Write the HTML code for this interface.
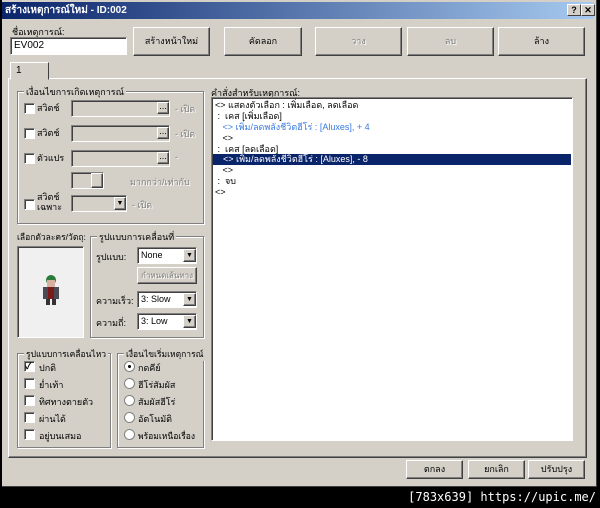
<!DOCTYPE html>
<html><head><meta charset="utf-8"><style>
*{box-sizing:border-box;margin:0;padding:0}
body{width:600px;height:508px;background:#000;position:relative;overflow:hidden;font-family:"Liberation Sans","Noto Sans CJK SC",sans-serif;font-size:9px;color:#000}
.a{position:absolute;white-space:nowrap}
#win{left:2px;top:0;width:595px;height:487px;background:#d4d0c8;border-right:1px solid #404040;border-bottom:1px solid #404040}
#tb{left:2px;top:2px;width:592px;height:17px;background:linear-gradient(90deg,#0a246a,#a6caf0);color:#fff;font-weight:bold;font-size:10px;line-height:17px;padding-left:3px}
.tbb{top:4px;width:14px;height:12px;background:#d4d0c8;border:1px solid;border-color:#fff #404040 #404040 #fff;color:#000;font-size:9px;font-weight:bold;text-align:center;line-height:10px}
.btn{background:#d4d0c8;border:1px solid;border-color:#fff #404040 #404040 #fff;box-shadow:inset -1px -1px #808080;text-align:center;font-size:9px;overflow:hidden}
.sunk{background:#fff;border:1px solid;border-color:#808080 #fff #fff #808080;box-shadow:inset 1px 1px #404040}
.dis{background:#d4d0c8}
.grp{border:1px solid #808080;box-shadow:1px 1px #fff, inset 1px 1px #fff}
.gl{background:#d4d0c8;padding:0 2px;top:-7px;left:6px;white-space:nowrap}
.cb{width:11px;height:11px;background:#fff;border:1px solid;border-color:#808080 #fff #fff #808080;box-shadow:inset 1px 1px #404040}
.rd{width:11px;height:11px;border-radius:50%;background:#fff;border:1px solid #808080}
.g{color:#808080;text-shadow:1px 1px #fff}
.row{left:3px;height:11px;line-height:11px;white-space:nowrap}
</style></head><body>
<div id="win" class="a"></div>
<div id="tb" class="a">สร้างเหตุการณ์ใหม่ - ID:002</div>
<div class="a tbb" style="left:567px">?</div>
<div class="a tbb" style="left:581px">✕</div>

<div class="a" style="left:12px;top:25px">ชื่อเหตุการณ์:</div>
<div class="a sunk" style="left:10px;top:37px;width:117px;height:18px;padding:2px 3px;font-size:10px">EV002</div>
<div class="a btn" style="left:133px;top:27px;width:77px;height:29px;line-height:27px">สร้างหน้าใหม่</div>
<div class="a btn" style="left:224px;top:27px;width:78px;height:29px;line-height:27px">คัดลอก</div>
<div class="a btn g" style="left:315px;top:27px;width:87px;height:29px;line-height:27px">วาง</div>
<div class="a btn g" style="left:407px;top:27px;width:87px;height:29px;line-height:27px">ลบ</div>
<div class="a btn" style="left:498px;top:27px;width:87px;height:29px;line-height:27px">ล้าง</div>

<div class="a" style="left:8px;top:78px;width:579px;height:380px;border:1px solid;border-color:#fff #404040 #404040 #fff;box-shadow:inset -1px -1px #808080"></div>
<div class="a" style="left:10px;top:62px;width:39px;height:18px;background:#d4d0c8;border:1px solid;border-color:#fff #404040 transparent #fff;padding:2px 5px;font-size:10px">1</div>

<div class="a grp" style="left:17px;top:91px;width:187px;height:133px"><span class="a gl">เงื่อนไขการเกิดเหตุการณ์</span></div>
<div class="a cb" style="left:24px;top:103px"></div><div class="a" style="left:37px;top:101px">สวิตช์</div>
<div class="a sunk dis" style="left:71px;top:100px;width:99px;height:17px"></div><div class="a btn" style="left:157px;top:102px;width:12px;height:12px;line-height:6px">...</div><div class="a g" style="left:175px;top:102px">- เปิด</div>
<div class="a cb" style="left:24px;top:128px"></div><div class="a" style="left:37px;top:126px">สวิตช์</div>
<div class="a sunk dis" style="left:71px;top:125px;width:99px;height:17px"></div><div class="a btn" style="left:157px;top:127px;width:12px;height:12px;line-height:6px">...</div><div class="a g" style="left:175px;top:127px">- เปิด</div>
<div class="a cb" style="left:24px;top:153px"></div><div class="a" style="left:37px;top:151px">ตัวแปร</div>
<div class="a sunk dis" style="left:71px;top:150px;width:99px;height:17px"></div><div class="a btn" style="left:157px;top:152px;width:12px;height:12px;line-height:6px">...</div><div class="a g" style="left:175px;top:152px">-</div>
<div class="a sunk dis" style="left:71px;top:172px;width:33px;height:17px"></div><div class="a btn" style="left:91px;top:173px;width:12px;height:15px"></div>
<div class="a g" style="left:130px;top:175px">มากกว่า/เท่ากับ</div>
<div class="a cb" style="left:24px;top:199px"></div><div class="a" style="left:37px;top:192px;line-height:10px">สวิตช์<br>เฉพาะ</div>
<div class="a sunk dis" style="left:71px;top:195px;width:56px;height:17px"></div><div class="a btn" style="left:114px;top:197px;width:12px;height:13px;font-size:7px;line-height:11px">▼</div><div class="a g" style="left:132px;top:198px">- เปิด</div>

<div class="a" style="left:211px;top:86px">คำสั่งสำหรับเหตุการณ์:</div>
<div class="a sunk" style="left:211px;top:97px;width:362px;height:344px">
<div class="a row" style="top:2px">&lt;&gt; แสดงตัวเลือก : เพิ่มเลือด, ลดเลือด</div>
<div class="a row" style="top:13px">&nbsp;: &nbsp;เคส [เพิ่มเลือด]</div>
<div class="a row" style="top:24px;color:#3a7be0">&nbsp;&nbsp;&nbsp;&lt;&gt; เพิ่ม/ลดพลังชีวิตฮีโร่ : [Aluxes], + 4</div>
<div class="a row" style="top:35px">&nbsp;&nbsp;&nbsp;&lt;&gt;</div>
<div class="a row" style="top:46px">&nbsp;: &nbsp;เคส [ลดเลือด]</div>
<div class="a row" style="top:56px;left:1px;width:358px;background:#0a246a;color:#fff">&nbsp;&nbsp;&nbsp;&nbsp;&lt;&gt; เพิ่ม/ลดพลังชีวิตฮีโร่ : [Aluxes], - 8</div>
<div class="a row" style="top:67px">&nbsp;&nbsp;&nbsp;&lt;&gt;</div>
<div class="a row" style="top:78px">&nbsp;: &nbsp;จบ</div>
<div class="a row" style="top:89px">&lt;&gt;</div>
</div>

<div class="a" style="left:17px;top:230px;font-size:8.5px">เลือกตัวละคร/วัตถุ:</div>
<div class="a sunk" style="left:17px;top:246px;width:67px;height:92px;background:#f0f0f0">
<svg class="a" style="left:22px;top:28px" width="22" height="32"><circle cx="11" cy="5" r="5" fill="#2a7a3a"/><rect x="7" y="5" width="8" height="7" fill="#d8b0a0"/><rect x="3" y="12" width="16" height="12" fill="#4a4a55"/><rect x="8" y="12" width="6" height="12" fill="#7a1a1a"/><rect x="6" y="24" width="4" height="6" fill="#333"/><rect x="12" y="24" width="4" height="6" fill="#333"/></svg>
</div>
<div class="a grp" style="left:90px;top:236px;width:114px;height:102px"><span class="a gl">รูปแบบการเคลื่อนที่</span></div>
<div class="a" style="left:96px;top:250px">รูปแบบ:</div>
<div class="a sunk" style="left:137px;top:247px;width:60px;height:17px;padding:2px 3px">None</div><div class="a btn" style="left:183px;top:249px;width:13px;height:13px;font-size:7px;line-height:11px">▼</div>
<div class="a btn g" style="left:137px;top:267px;width:60px;height:17px;line-height:15px;font-size:8px">กำหนดเส้นทาง</div>
<div class="a" style="left:96px;top:294px">ความเร็ว:</div>
<div class="a sunk" style="left:137px;top:291px;width:60px;height:17px;padding:2px 3px">3: Slow</div><div class="a btn" style="left:183px;top:293px;width:13px;height:13px;font-size:7px;line-height:11px">▼</div>
<div class="a" style="left:96px;top:316px">ความถี่:</div>
<div class="a sunk" style="left:137px;top:313px;width:60px;height:17px;padding:2px 3px">3: Low</div><div class="a btn" style="left:183px;top:315px;width:13px;height:13px;font-size:7px;line-height:11px">▼</div>

<div class="a grp" style="left:17px;top:353px;width:94px;height:95px"><span class="a gl" style="font-size:8.5px">รูปแบบการเคลื่อนไหว</span></div>
<div class="a cb" style="left:24px;top:361px;font-size:9px;line-height:8px;font-weight:bold">✓</div><div class="a" style="left:39px;top:361px">ปกติ</div>
<div class="a cb" style="left:24px;top:378px"></div><div class="a" style="left:39px;top:378px">ย่ำเท้า</div>
<div class="a cb" style="left:24px;top:395px"></div><div class="a" style="left:39px;top:395px">ทิศทางตายตัว</div>
<div class="a cb" style="left:24px;top:412px"></div><div class="a" style="left:39px;top:412px">ผ่านได้</div>
<div class="a cb" style="left:24px;top:429px"></div><div class="a" style="left:39px;top:429px">อยู่บนเสมอ</div>

<div class="a grp" style="left:117px;top:353px;width:87px;height:95px"><span class="a gl" style="font-size:8.5px">เงื่อนไขเริ่มเหตุการณ์</span></div>
<div class="a rd" style="left:124px;top:361px"><div class="a" style="left:3px;top:3px;width:3px;height:3px;background:#000;border-radius:50%"></div></div><div class="a" style="left:138px;top:361px">กดคีย์</div>
<div class="a rd" style="left:124px;top:378px"></div><div class="a" style="left:138px;top:378px">ฮีโร่สัมผัส</div>
<div class="a rd" style="left:124px;top:395px"></div><div class="a" style="left:138px;top:395px">สัมผัสฮีโร่</div>
<div class="a rd" style="left:124px;top:412px"></div><div class="a" style="left:138px;top:412px">อัตโนมัติ</div>
<div class="a rd" style="left:124px;top:429px"></div><div class="a" style="left:138px;top:429px;font-size:8.5px">พร้อมเหนือเรื่อง</div>

<div class="a btn" style="left:406px;top:460px;width:57px;height:19px;line-height:17px">ตกลง</div>
<div class="a btn" style="left:468px;top:460px;width:57px;height:19px;line-height:17px">ยกเลิก</div>
<div class="a btn" style="left:528px;top:460px;width:57px;height:19px;line-height:17px">ปรับปรุง</div>

<div class="a" style="right:4px;top:490px;color:#fff;font-family:'DejaVu Sans Mono',monospace;font-size:12px">[783x639] https://upic.me/</div>
</body></html>
